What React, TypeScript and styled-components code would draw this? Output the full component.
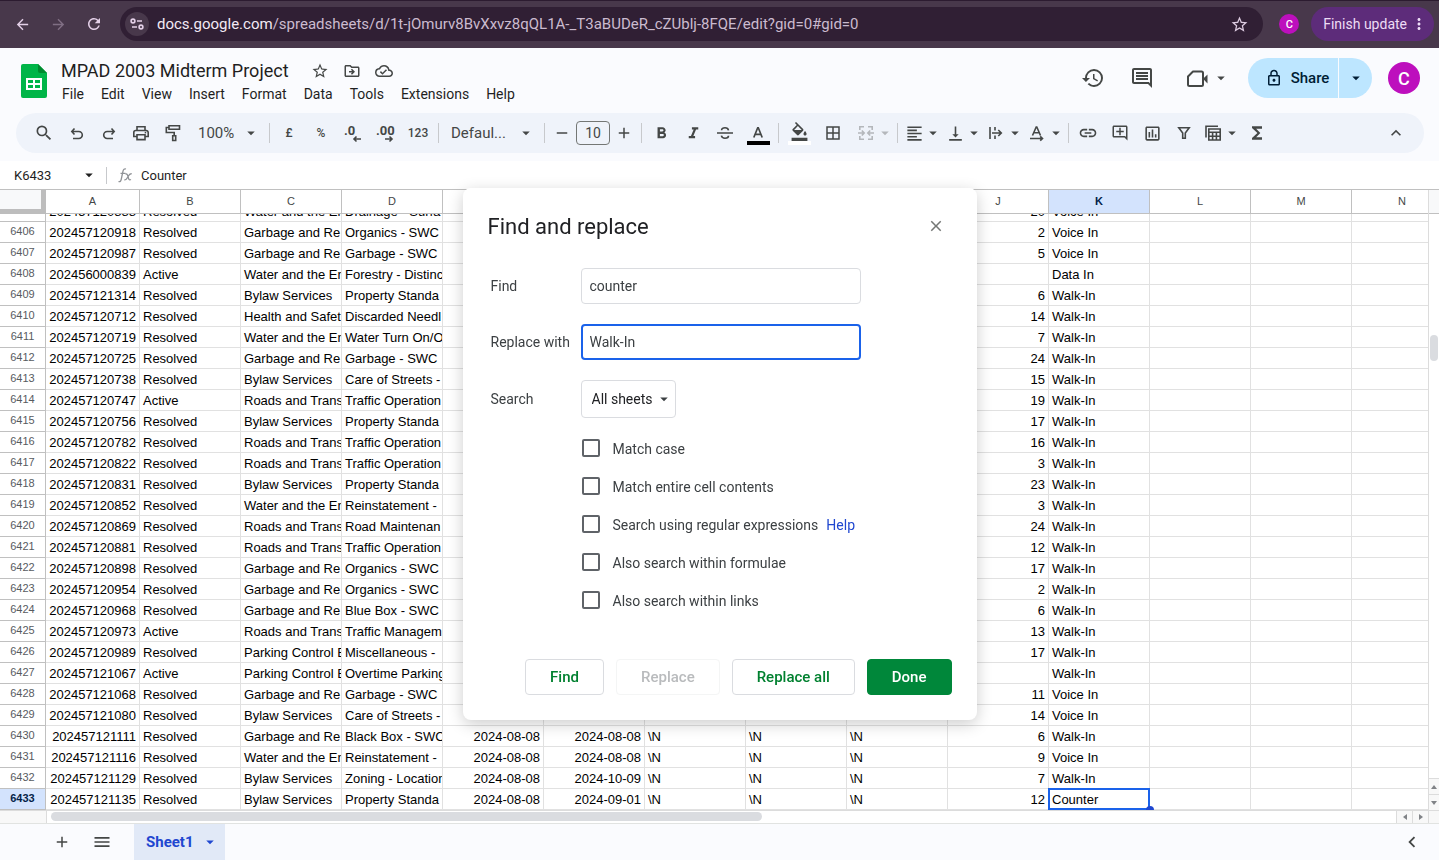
import React, { useLayoutEffect, useRef } from "react";
import styled, { createGlobalStyle, css } from "styled-components";
import {
  MdAdd, MdArrowBack, MdArrowDropDown, MdArrowForward, MdBorderAll, MdClose, MdExpandLess, MdFormatAlignLeft,
  MdFormatBold, MdFormatColorFill, MdFormatItalic, MdFunctions, MdHistory, MdLink, MdMenu, MdMoreVert,
  MdOutlineAddComment, MdOutlineComment, MdOutlineDriveFileMove, MdOutlineInsertChart, MdOutlineLock,
  MdOutlineCloudDone, MdRefresh, MdRemove, MdSearch, MdStarBorder, MdChevronLeft, MdVerticalAlignBottom,
} from "react-icons/md";

const ui = `Roboto, "Liberation Sans", sans-serif`;
const display = `Roboto, "Open Sans", sans-serif`;
const arial = `"Liberation Sans", Arial, sans-serif`;

const GlobalStyle = createGlobalStyle`
  *, *::before, *::after { box-sizing: border-box; }
  body { margin: 0; background: #fff; font-family: ${ui}; overflow: hidden; }
  button, input, select { font: inherit; color: inherit; margin: 0; }
  svg { display: block; flex: none; }
`;

const Page = styled.div`
  display: flex;
  flex-direction: column;
  height: 100vh;
`;

/* ---------- browser chrome ---------- */
const BrowserBar = styled.div`
  display: flex;
  align-items: center;
  height: 48px;
  padding: 0 5px 1px 4px;
  background: #48384b;
  border-top: 1px solid #2c1b30;
  color: #dccbe0;
`;
const NavButton = styled.button<{ $dim?: boolean }>`
  display: grid;
  place-items: center;
  width: 36px;
  height: 32px;
  padding: 0;
  border: 0;
  background: none;
  color: ${(p) => (p.$dim ? "#806f84" : "#e4d0e8")};
`;
const Omnibox = styled.div`
  display: flex;
  flex: 1;
  align-items: center;
  min-width: 0;
  height: 34px;
  margin: 0 16px 0 8px;
  padding: 0 14px 0 5px;
  border-radius: 17px;
  background: #301f34;
`;
const SiteInfo = styled.button`
  display: grid;
  place-items: center;
  width: 24px;
  height: 24px;
  padding: 0;
  border: 0;
  border-radius: 50%;
  background: #48384b;
  color: #e4d0e8;
`;
const Url = styled.span`
  flex: 1;
  margin-left: 8px;
  font-size: 15px;
  white-space: nowrap;
  overflow: hidden;
  color: #cbbbcf;
`;
const Host = styled.span`
  color: #f3eaf5;
`;
const Avatar = styled.button<{ $size: number }>`
  width: ${(p) => p.$size}px;
  height: ${(p) => p.$size}px;
  flex: none;
  padding: 0;
  border: 0;
  border-radius: 50%;
  background: #bd0fbd;
  color: #fff;
  font-size: ${(p) => (p.$size > 24 ? 18 : 11)}px;
  font-weight: 500;
`;
const UpdateButton = styled.button`
  display: flex;
  align-items: center;
  gap: 3px;
  height: 34px;
  margin-left: 12px;
  padding: 0 6px 0 12px;
  border: 0;
  border-radius: 17px;
  background: #5d2c7a;
  color: #eddcf5;
  font-size: 14px;
  white-space: nowrap;
`;

/* ---------- document header ---------- */
const Header = styled.header`
  padding-bottom: 8px;
  background: #fafbfe;
  color: #444746;
`;
const TitleBar = styled.div`
  display: flex;
  align-items: center;
  height: 65px;
  padding: 0 19px 0 21px;
`;
const Heading = styled.div`
  flex: 1;
  min-width: 0;
  margin-left: 14px;
  padding-top: 2px;
`;
const TitleRow = styled.div`
  display: flex;
  align-items: center;
  gap: 14px;
  height: 24px;
`;
const Title = styled.h1`
  margin: 0 8px 0 0;
  color: #1f1f1f;
  font: 400 18px/24px ${display};
  white-space: nowrap;
`;
const PlainButton = styled.button`
  display: flex;
  align-items: center;
  padding: 0;
  border: 0;
  background: none;
  color: inherit;
`;
const MenuBar = styled.nav`
  display: flex;
  gap: 17px;
  height: 22px;
  margin-left: 1px;
`;
const MenuItem = styled.button`
  padding: 0;
  border: 0;
  background: none;
  color: #1f1f1f;
  font-size: 14px;
  line-height: 22px;
`;
const HeaderActions = styled.div`
  display: flex;
  align-self: flex-start;
  align-items: center;
  height: 60px;
`;
const HeaderIcons = styled.div`
  display: flex;
  align-items: center;
  gap: 25px;
  margin-right: 18px;
`;
const CallButton = styled(PlainButton)`
  gap: 3px;
  padding-left: 6px;
`;
const ShareGroup = styled.div`
  display: flex;
  gap: 1px;
  height: 40px;
  margin-right: 16px;
  border-radius: 20px;
  overflow: hidden;
  color: #001d35;
`;
const ShareButton = styled.button`
  display: flex;
  align-items: center;
  justify-content: center;
  gap: 8px;
  width: 90px;
  padding: 0 0 0 8px;
  border: 0;
  background: #bde6ff;
  font-size: 15px;
  font-weight: 500;
`;
const ShareMenu = styled(ShareButton)`
  width: 33px;
  padding: 0;
`;

/* ---------- toolbar ---------- */
const Toolbar = styled.div`
  display: flex;
  align-items: center;
  height: 40px;
  margin: 0 15px 0 16px;
  padding: 0 12px 0 10px;
  border-radius: 20px;
  background: #eff3fa;
`;
const Tool = styled.button<{ $w?: number; $faded?: boolean }>`
  display: flex;
  flex: none;
  align-items: center;
  justify-content: center;
  width: ${(p) => p.$w ?? 32}px;
  height: 28px;
  padding: 0;
  border: 0;
  background: none;
  font-size: 12px;
  font-weight: 500;
  color: ${(p) => (p.$faded ? "#b4b7bb" : "#444746")};
`;
const SplitTool = styled(Tool)`
  justify-content: flex-end;
`;
const MenuTool = styled(Tool)`
  justify-content: space-between;
  padding: 0 6px 0 9px;
  font-size: 15px;
  font-weight: 400;
`;
const Divider = styled.span`
  flex: none;
  width: 1px;
  height: 20px;
  margin: 0 3px;
  background: #c7c9cc;
`;
const SizeBox = styled.input`
  width: 34px;
  height: 24px;
  padding: 0;
  border: 1px solid #747775;
  border-radius: 4px;
  background: none;
  color: #444746;
  font-size: 14px;
  text-align: center;
`;
const Swatched = styled.span<{ $color: string }>`
  display: grid;
  justify-items: center;
  align-content: end;
  width: 23px;
  height: 24px;
  border-bottom: 4px solid ${(p) => p.$color};
`;
const Spacer = styled.span`
  flex: 1;
`;

/* ---------- formula bar ---------- */
const FormulaBar = styled.div`
  display: flex;
  align-items: center;
  height: 28px;
  color: #1f1f1f;
  font-size: 13px;
`;
const NameBox = styled.input`
  width: 66px;
  padding: 0;
  margin-left: 14px;
  border: 0;
  background: none;
`;
const FormulaRule = styled.span`
  width: 1px;
  height: 17px;
  margin: 0 11px 0 8px;
  background: #c7c9cc;
`;
const FormulaInput = styled.input`
  flex: 1;
  min-width: 0;
  margin-left: 8px;
  padding: 0;
  border: 0;
  background: none;
`;

/* ---------- grid ---------- */
const GridArea = styled.div`
  display: flex;
  flex: 1;
  min-height: 0;
  border-top: 1px solid #c0c0c0;
`;
const GridViewport = styled.div`
  flex: 1;
  min-width: 0;
  overflow: hidden;
`;
const Sheet = styled.table`
  width: 1453px;
  table-layout: fixed;
  border-collapse: separate;
  border-spacing: 0;
  font: 13px/18px ${arial};
  color: #000;
`;
const Col = styled.col<{ $w: number }>`
  width: ${(p) => p.$w}px;
`;
const headCell = css`
  padding: 0 0 2px;
  border: 0 solid #c0c0c0;
  border-right-width: 1px;
  border-bottom-width: 1px;
  font-size: 11px;
  text-align: center;
`;
const HeadCell = styled.th<{ $active?: boolean }>`
  ${headCell}
  position: sticky;
  top: 0;
  z-index: 1;
  height: 24px;
  background: ${(p) => (p.$active ? "#d3e3fd" : "#fff")};
  color: ${(p) => (p.$active ? "#041e49" : "#444746")};
  font-weight: ${(p) => (p.$active ? 700 : 400)};
`;
const Corner = styled.th`
  ${headCell}
  position: sticky;
  top: 0;
  z-index: 1;
  background: #f8f9fa;
  border-color: #bdbdbd;
  border-right-width: 5px;
  border-bottom-width: 5px;
`;
const RowHead = styled.th<{ $active?: boolean }>`
  ${headCell}
  height: 21px;
  background: ${(p) => (p.$active ? "#d3e3fd" : "#fff")};
  color: ${(p) => (p.$active ? "#041e49" : "#575b5f")};
  font-weight: ${(p) => (p.$active ? 700 : 400)};
`;
const Cell = styled.td<{ $right?: boolean; $selected?: boolean }>`
  height: 21px;
  padding: 2px 3px 0;
  border: 0 solid #e1e1e1;
  border-right-width: 1px;
  border-bottom-width: 1px;
  white-space: nowrap;
  text-align: ${(p) => (p.$right ? "right" : "left")};
  overflow: ${(p) => (p.$selected ? "visible" : "hidden")};
  ${(p) =>
    p.$selected &&
    css`
      position: relative;
      &::before {
        content: "";
        position: absolute;
        inset: -1px;
        border: 2px solid #1a62ea;
      }
      &::after {
        content: "";
        position: absolute;
        right: -5px;
        bottom: -1px;
        width: 8px;
        height: 4px;
        border-radius: 4px 4px 0 0;
        background: #1f47d0;
      }
    `}
`;
const VScroll = styled.div`
  display: flex;
  flex-direction: column;
  width: 11px;
  border-left: 1px solid #dcdcdc;
`;
const VScrollHead = styled.div`
  height: 24px;
  background: #f8f9fa;
  border-bottom: 1px solid #c0c0c0;
`;
const VTrack = styled.div`
  flex: 1;
  padding: 121px 1px 0;
`;
const VThumb = styled.div`
  height: 26px;
  border-radius: 4px;
  background: #dadce0;
`;
const ScrollStep = styled.button<{ $side: "top" | "left" }>`
  display: grid;
  place-items: center;
  flex: none;
  width: ${(p) => (p.$side === "left" ? "16px" : "auto")};
  height: ${(p) => (p.$side === "top" ? "16px" : "auto")};
  padding: 0;
  border: 0 solid #dcdcdc;
  border-${(p) => p.$side}-width: 1px;
  background: #f8f8f8;
  color: #808387;
`;
const HScroll = styled.div`
  display: flex;
  height: 13px;
  border-top: 1px solid #dcdcdc;
`;
const HScrollHead = styled.div`
  width: 47px;
  background: #f8f8f8;
  border-right: 1px solid #dcdcdc;
`;
const HTrack = styled.div`
  flex: 1;
  padding: 1px 4px;
`;
const HThumb = styled.div`
  width: 53%;
  height: 9px;
  border-radius: 5px;
  background: #dadce0;
`;
const ScrollCorner = styled.div`
  width: 11px;
  background: #f8f8f8;
  border-left: 1px solid #dcdcdc;
`;

/* ---------- sheet tabs ---------- */
const SheetBar = styled.footer`
  display: flex;
  align-items: center;
  height: 37px;
  padding: 0 16px 0 42px;
  border-top: 1px solid #e1e3e1;
  background: #fafbfe;
  color: #444746;
`;
const SheetTool = styled.button`
  display: grid;
  place-items: center;
  width: 40px;
  height: 36px;
  padding: 0;
  border: 0;
  background: none;
  color: inherit;
`;
const SheetTab = styled.button`
  display: flex;
  align-items: center;
  gap: 7px;
  height: 100%;
  margin-left: 12px;
  padding: 0 6px 0 12px;
  border: 0;
  background: #e1e9f7;
  color: #1f47d0;
  font-size: 15px;
  font-weight: 700;
`;

/* ---------- dialog ---------- */
const DialogLayer = styled.div`
  position: fixed;
  inset: 0;
  display: flex;
  align-items: flex-start;
  justify-content: center;
  padding-top: 188px;
  z-index: 5;
`;
const Dialog = styled.form`
  display: flex;
  flex-direction: column;
  width: 514px;
  padding: 24px 25px 25px;
  border-radius: 8px;
  background: #fff;
  box-shadow: 0 4px 16px rgba(0, 0, 0, 0.2);
  color: #3c4043;
  font-size: 14px;
`;
const DialogHead = styled.div`
  display: flex;
  justify-content: space-between;
  align-items: center;
  height: 30px;
  margin-bottom: 26px;
  padding-right: 7px;
  color: #202124;
`;
const DialogTitle = styled.h2`
  margin: 0;
  font: 400 22px/30px ${display};
`;
const CloseButton = styled(PlainButton)`
  height: 28px;
  align-self: flex-start;
  color: #747775;
`;
const Field = styled.div`
  display: grid;
  grid-template-columns: 90px auto;
  justify-content: start;
  align-items: center;
  margin-bottom: 20px;
  padding-left: 3px;
`;
const TextInput = styled.input<{ $active?: boolean }>`
  width: 280px;
  height: 36px;
  padding: 0 ${(p) => (p.$active ? 7 : 8)}px;
  border: ${(p) => (p.$active ? "2px solid #1a62ea" : "1px solid #dadce0")};
  border-radius: 4px;
  background: #fff;
  outline: none;
`;
const SelectBox = styled.span`
  display: grid;
  grid-template-areas: "box";
  align-items: center;
  width: 95px;
`;
const Select = styled.select`
  grid-area: box;
  height: 38px;
  padding: 0 0 0 10px;
  border: 1px solid #dadce0;
  border-radius: 4px;
  background: none;
  appearance: none;
  color: #202124;
`;
const SelectCaret = styled.span`
  grid-area: box;
  justify-self: end;
  padding-right: 3px;
  pointer-events: none;
`;
const Options = styled.div`
  display: grid;
  gap: 20px;
  margin: 1px 0 50px 94px;
`;
const Option = styled.div`
  display: flex;
  align-items: center;
  height: 18px;
  line-height: 16px;
`;
const CheckBox = styled.input`
  width: 18px;
  height: 18px;
  margin-right: 13px;
  appearance: none;
  border: 2px solid #5f6368;
  border-radius: 2px;
  background: #fff;
`;
const OptionLabel = styled.label`
  padding-top: 2px;
`;
const HelpLink = styled.a`
  margin-left: 8px;
  padding-top: 2px;
  color: #1f47d0;
  text-decoration: none;
`;
const Actions = styled.div`
  display: flex;
  justify-content: flex-end;
  gap: 12px;
`;
const ActionButton = styled.button<{ $kind?: "primary" }>`
  height: 36px;
  padding: 0 24px;
  border: 1px solid #dadce0;
  border-radius: 4px;
  background: #fff;
  color: #00802f;
  font-weight: 500;
  font-size: 15px;
  white-space: nowrap;
  &:disabled {
    border-color: #f4f5f5;
    color: #b9bbbd;
  }
  ${(p) =>
    p.$kind === "primary" &&
    css`
      border-color: #00873a;
      background: #00873a;
      color: #fff;
    `}
`;

/* ---------- drawings ---------- */
const Line = ({ size = 20, children }: { size?: number; children: React.ReactNode }) => (
  <svg width={size} height={size} viewBox="0 0 20 20" fill="none" stroke="currentColor" strokeWidth="1.6" aria-hidden="true">
    {children}
  </svg>
);
const Caret = () => <MdArrowDropDown size={18} />;

const SheetsLogo = () => (
  <svg width="26" height="34" viewBox="0 0 26 34" aria-hidden="true">
    <path d="M2 0h15l9 9v23a2 2 0 0 1-2 2H2a2 2 0 0 1-2-2V2a2 2 0 0 1 2-2z" fill="#00b548" />
    <path d="M17 0l9 9h-7a2 2 0 0 1-2-2z" fill="#008a2f" />
    <path d="M5 14h16v12H5zM7 16v3h5v-3zm7 0v3h5v-3zm-7 5v3h5v-3zm7 0v3h5v-3z" fill="#fff" fillRule="evenodd" />
  </svg>
);
const SiteInfoIcon = () => (
  <svg width="14" height="14" viewBox="0 0 14 14" fill="none" stroke="currentColor" strokeWidth="1.6" aria-hidden="true">
    <circle cx="3" cy="4" r="1.9" /><path d="M7 4h5M2 10h5" /><circle cx="11" cy="10" r="1.9" />
  </svg>
);
const UndoIcon = () => <Line><path d="M7.500 5.500 4.800 8.500l2.700 3M4.800 8.500h7a3.500 3.500 0 0 1 0 7H6" /></Line>;
const RedoIcon = () => <Line><path d="M12.500 5.500l2.700 3-2.700 3M15.200 8.500h-7a3.500 3.500 0 0 0 0 7H14" /></Line>;
const PrintIcon = () => (
  <Line><path d="M6 7V3.800h8V7M5.500 13.500H2.800V9.500a2 2 0 0 1 2-2h10.400a2 2 0 0 1 2 2v4h-2.700M6 11.800h8v4.800H6z" /><path d="M13.700 9.600h1.500" /></Line>
);
const PaintIcon = () => (
  <Line><path d="M6 2.800h10.500v3.400H6zM6 4.500H3.300v5h7.900v3.200M9.700 12.700h3v4.800h-3z" /></Line>
);
const StrikeIcon = () => (
  <Line><path d="M2 10h16M13.500 7.300c-.3-1.600-1.500-2.500-3.500-2.500S6.600 5.700 6.600 7.300M6.400 12.700c.3 1.600 1.600 2.500 3.600 2.500s3.500-.9 3.500-2.500" /></Line>
);
const MergeIcon = () => (
  <Line><path d="M8 3.800H3.800V7M12 3.800h4.200V7M8 16.200H3.800V13M12 16.200h4.200V13M2 10h6M5.800 7.500 8.200 10l-2.400 2.500M18 10h-6M14.200 7.500 11.800 10l2.400 2.500" /></Line>
);
const WrapIcon = () => <Line><path d="M4 4v12M9 4v3.500M9 12.500V16M6 10h9M12.300 7l3 3-3 3" /></Line>;
const RotateIcon = () => (
  <Line><path d="M5.500 12.500 9.200 4h.6l3.700 8.500M6.800 9.800h5.400M3 15.500h12M13.200 13.300l2.300 2.200-2.300 2.200" /></Line>
);
const FilterIcon = () => <Line><path d="M4.800 4.800h10.400L11.300 10v5.300H8.700V10z" /></Line>;
const TableViewsIcon = () => (
  <Line><path d="M5.800 6h11.400v11H5.800zM5.800 9.300h11.400M5.800 13.200h11.400M9.600 9.300V17M13.400 9.300V17M3 14.500V3.300h12" /></Line>
);
const DecimalIcon = ({ digits, more }: { digits: string; more?: boolean }) => (
  <svg width="22" height="20" viewBox="0 0 22 20" aria-hidden="true">
    <text x="2" y="12" fontSize="13" fontWeight="700" fontFamily="Roboto, sans-serif" fill="currentColor">{digits}</text>
    <path d={more ? "M11 16h7M15.500 13.500 18 16l-2.500 2.500" : "M12 16h7M14.500 13.500 12 16l2.500 2.500"} stroke="currentColor" strokeWidth="1.600" fill="none" />
  </svg>
);
const TextColorIcon = () => (
  <svg width="14" height="16" viewBox="0 0 14 16" fill="none" stroke="currentColor" strokeWidth="1.700" aria-hidden="true">
    <path d="M2.800 12.500 6.700 2.800h.6l3.900 9.700M4.200 9.300h5.600" />
  </svg>
);
const FxIcon = () => (
  <svg width="15" height="16" viewBox="0 0 15 16" fill="none" stroke="#8f9296" strokeWidth="1.300" aria-hidden="true">
    <path d="M.5 14.500c1.500.5 2.300-.2 2.700-2L5 4.200C5.400 2.300 6.300 1.500 8 2M2.500 6.300h5M7.500 7.300c1.500-.8 2 .2 2.500 2.200.600 2.500 1 4 3 3M13.700 6.800c-2-.5-2.700 1-3.700 2.900S8 13 6.300 12.800" />
  </svg>
);
const MeetIcon = () => (
  <svg width="24" height="24" viewBox="0 0 24 24" fill="none" stroke="currentColor" strokeWidth="2" aria-hidden="true">
    <path d="M8 5.500h8.500A1.500 1.500 0 0 1 18 7v11.500a1.500 1.500 0 0 1-1.500 1.500h-12A1.500 1.500 0 0 1 3 18.500v-8z" strokeLinejoin="round" />
    <path d="M18 12.800 22.500 8.500v9z" fill="currentColor" stroke="none" />
  </svg>
);
const Triangle = ({ d }: { d: string }) => (
  <svg width="6" height="6" viewBox="0 0 6 6" fill="currentColor" aria-hidden="true"><path d={d} /></svg>
);

/* ---------- data ---------- */
const columns = ["A", "B", "C", "D", "E", "F", "G", "H", "I", "J", "K", "L", "M", "N"];
const GAR = "Garbage and Re";
const WAT = "Water and the En";
const BYL = "Bylaw Services";
const ROA = "Roads and Trans";
const PAR = "Parking Control E";
const PROP = "Property Standa";
const TRAF = "Traffic Operation";

type Row = [number, string, string, string, string, string, string, string?];
const rows: Row[] = [
  [6405, "202457120888", "Resolved", WAT, "Drainage - Surfa", "20", "Voice In"],
  [6406, "202457120918", "Resolved", GAR, "Organics - SWC", "2", "Voice In"],
  [6407, "202457120987", "Resolved", GAR, "Garbage - SWC", "5", "Voice In"],
  [6408, "202456000839", "Active", WAT, "Forestry - Distinc", "", "Data In"],
  [6409, "202457121314", "Resolved", BYL, PROP, "6", "Walk-In"],
  [6410, "202457120712", "Resolved", "Health and Safet", "Discarded Needl", "14", "Walk-In"],
  [6411, "202457120719", "Resolved", WAT, "Water Turn On/O", "7", "Walk-In"],
  [6412, "202457120725", "Resolved", GAR, "Garbage - SWC", "24", "Walk-In"],
  [6413, "202457120738", "Resolved", BYL, "Care of Streets -", "15", "Walk-In"],
  [6414, "202457120747", "Active", ROA, TRAF, "19", "Walk-In"],
  [6415, "202457120756", "Resolved", BYL, PROP, "17", "Walk-In"],
  [6416, "202457120782", "Resolved", ROA, TRAF, "16", "Walk-In"],
  [6417, "202457120822", "Resolved", ROA, TRAF, "3", "Walk-In"],
  [6418, "202457120831", "Resolved", BYL, PROP, "23", "Walk-In"],
  [6419, "202457120852", "Resolved", WAT, "Reinstatement -", "3", "Walk-In"],
  [6420, "202457120869", "Resolved", ROA, "Road Maintenan", "24", "Walk-In"],
  [6421, "202457120881", "Resolved", ROA, TRAF, "12", "Walk-In"],
  [6422, "202457120898", "Resolved", GAR, "Organics - SWC", "17", "Walk-In"],
  [6423, "202457120954", "Resolved", GAR, "Organics - SWC", "2", "Walk-In"],
  [6424, "202457120968", "Resolved", GAR, "Blue Box - SWC", "6", "Walk-In"],
  [6425, "202457120973", "Active", ROA, "Traffic Managem", "13", "Walk-In"],
  [6426, "202457120989", "Resolved", PAR, "Miscellaneous -", "17", "Walk-In"],
  [6427, "202457121067", "Active", PAR, "Overtime Parking", "", "Walk-In"],
  [6428, "202457121068", "Resolved", GAR, "Garbage - SWC", "11", "Voice In"],
  [6429, "202457121080", "Resolved", BYL, "Care of Streets -", "14", "Voice In", "2024-08-08"],
  [6430, "202457121111", "Resolved", GAR, "Black Box - SWC", "6", "Walk-In", "2024-08-08"],
  [6431, "202457121116", "Resolved", WAT, "Reinstatement -", "9", "Voice In", "2024-08-08"],
  [6432, "202457121129", "Resolved", BYL, "Zoning - Location", "7", "Walk-In", "2024-10-09"],
  [6433, "202457121135", "Resolved", BYL, PROP, "12", "Counter", "2024-09-01"],
];

function SheetGrid() {
  const viewport = useRef<HTMLDivElement>(null);
  useLayoutEffect(() => {
    const el = viewport.current;
    if (el) el.scrollTop = el.scrollHeight;
  }, []);
  return (
    <GridArea>
      <GridViewport ref={viewport}>
        <Sheet>
          <colgroup>
            <Col $w={46} />
            {columns.map((c, i) => <Col key={c} $w={i === 0 ? 94 : 101} />)}
          </colgroup>
          <thead>
            <tr>
              <Corner aria-label="Select all" />
              {columns.map((c) => <HeadCell key={c} scope="col" $active={c === "K"}>{c}</HeadCell>)}
            </tr>
          </thead>
          <tbody>
            {rows.map(([n, id, status, dept, kind, days, channel, closed]) => (
              <tr key={n}>
                <RowHead scope="row" $active={n === 6433}>{n}</RowHead>
                <Cell $right>{id}</Cell>
                <Cell>{status}</Cell>
                <Cell>{dept}</Cell>
                <Cell>{kind}</Cell>
                <Cell $right>{closed && "2024-08-08"}</Cell>
                <Cell $right>{closed}</Cell>
                <Cell>{closed && "\\N"}</Cell>
                <Cell>{closed && "\\N"}</Cell>
                <Cell>{closed && "\\N"}</Cell>
                <Cell $right>{days}</Cell>
                <Cell $selected={n === 6433}>{channel}</Cell>
                <Cell /><Cell /><Cell />
              </tr>
            ))}
          </tbody>
        </Sheet>
      </GridViewport>
      <VScroll>
        <VScrollHead />
        <VTrack><VThumb /></VTrack>
        <ScrollStep $side="top" aria-label="Scroll up"><Triangle d="M0 5h6L3 1z" /></ScrollStep>
        <ScrollStep $side="top" aria-label="Scroll down"><Triangle d="M0 1h6L3 5z" /></ScrollStep>
      </VScroll>
    </GridArea>
  );
}

const menus = ["File", "Edit", "View", "Insert", "Format", "Data", "Tools", "Extensions", "Help"];

const options = [
  "Match case",
  "Match entire cell contents",
  "Search using regular expressions",
  "Also search within formulae",
  "Also search within links",
];

export default function App() {
  return (
    <Page>
      <GlobalStyle />
      <BrowserBar>
        <NavButton aria-label="Back"><MdArrowBack size={17} /></NavButton>
        <NavButton aria-label="Forward" $dim><MdArrowForward size={17} /></NavButton>
        <NavButton aria-label="Reload"><MdRefresh size={18} /></NavButton>
        <Omnibox>
          <SiteInfo aria-label="Site information"><SiteInfoIcon /></SiteInfo>
          <Url><Host>docs.google.com</Host>/spreadsheets/d/1t-jOmurv8BvXxvz8qQL1A-_T3aBUDeR_cZUblj-8FQE/edit?gid=0#gid=0</Url>
          <PlainButton aria-label="Bookmark"><MdStarBorder size={19} /></PlainButton>
        </Omnibox>
        <Avatar $size={20}>C</Avatar>
        <UpdateButton>Finish update<MdMoreVert size={18} /></UpdateButton>
      </BrowserBar>

      <Header>
        <TitleBar>
          <SheetsLogo />
          <Heading>
            <TitleRow>
              <Title>MPAD 2003 Midterm Project</Title>
              <PlainButton aria-label="Star"><MdStarBorder size={18} /></PlainButton>
              <PlainButton aria-label="Move"><MdOutlineDriveFileMove size={18} /></PlainButton>
              <PlainButton aria-label="Document status"><MdOutlineCloudDone size={18} /></PlainButton>
            </TitleRow>
            <MenuBar>{menus.map((m) => <MenuItem key={m}>{m}</MenuItem>)}</MenuBar>
          </Heading>
          <HeaderActions>
            <HeaderIcons>
              <PlainButton aria-label="Version history"><MdHistory size={24} /></PlainButton>
              <PlainButton aria-label="Comments"><MdOutlineComment size={24} /></PlainButton>
              <CallButton aria-label="Join a call"><MeetIcon /><Caret /></CallButton>
            </HeaderIcons>
            <ShareGroup>
              <ShareButton><MdOutlineLock size={18} />Share</ShareButton>
              <ShareMenu aria-label="Sharing options"><Caret /></ShareMenu>
            </ShareGroup>
            <Avatar $size={32}>C</Avatar>
          </HeaderActions>
        </TitleBar>

        <Toolbar role="toolbar">
          <Tool $w={35} aria-label="Search the menus"><MdSearch size={20} /></Tool>
          <Tool aria-label="Undo"><UndoIcon /></Tool>
          <Tool aria-label="Redo"><RedoIcon /></Tool>
          <Tool aria-label="Print"><PrintIcon /></Tool>
          <Tool aria-label="Paint format"><PaintIcon /></Tool>
          <MenuTool $w={77}>100%<Caret /></MenuTool>
          <Divider />
          <Tool>£</Tool>
          <Tool>%</Tool>
          <Tool aria-label="Decrease decimal places"><DecimalIcon digits=".0" /></Tool>
          <Tool aria-label="Increase decimal places"><DecimalIcon digits=".00" more /></Tool>
          <Tool $w={34}>123</Tool>
          <Divider />
          <MenuTool $w={99}>Defaul...<Caret /></MenuTool>
          <Divider />
          <Tool $w={28} aria-label="Decrease font size"><MdRemove size={18} /></Tool>
          <SizeBox aria-label="Font size" defaultValue="10" />
          <Tool $w={28} aria-label="Increase font size"><MdAdd size={18} /></Tool>
          <Divider />
          <Tool aria-label="Bold"><MdFormatBold size={19} /></Tool>
          <Tool aria-label="Italic"><MdFormatItalic size={19} /></Tool>
          <Tool aria-label="Strikethrough"><StrikeIcon /></Tool>
          <Tool $w={34} aria-label="Text colour"><Swatched $color="#000"><TextColorIcon /></Swatched></Tool>
          <Divider />
          <Tool $w={34} aria-label="Fill colour"><Swatched $color="#fff"><MdFormatColorFill size={19} /></Swatched></Tool>
          <Tool $w={34} aria-label="Borders"><MdBorderAll size={18} /></Tool>
          <SplitTool $w={44} $faded aria-label="Merge cells"><MergeIcon /><Caret /></SplitTool>
          <Divider />
          <SplitTool $w={41} aria-label="Horizontal align"><MdFormatAlignLeft size={19} /><Caret /></SplitTool>
          <SplitTool $w={41} aria-label="Vertical align"><MdVerticalAlignBottom size={19} /><Caret /></SplitTool>
          <SplitTool $w={41} aria-label="Text wrapping"><WrapIcon /><Caret /></SplitTool>
          <SplitTool $w={41} aria-label="Text rotation"><RotateIcon /><Caret /></SplitTool>
          <Divider />
          <Tool aria-label="Insert link"><MdLink size={20} /></Tool>
          <Tool aria-label="Insert comment"><MdOutlineAddComment size={18} /></Tool>
          <Tool aria-label="Insert chart"><MdOutlineInsertChart size={19} /></Tool>
          <Tool aria-label="Create a filter"><FilterIcon /></Tool>
          <SplitTool $w={41} aria-label="Filter views"><TableViewsIcon /><Caret /></SplitTool>
          <Tool aria-label="Functions"><MdFunctions size={20} /></Tool>
          <Spacer />
          <Tool aria-label="Hide the menus"><MdExpandLess size={20} /></Tool>
        </Toolbar>
      </Header>

      <FormulaBar>
        <NameBox aria-label="Name box" defaultValue="K6433" />
        <Caret />
        <FormulaRule />
        <FxIcon />
        <FormulaInput aria-label="Formula" defaultValue="Counter" />
      </FormulaBar>

      <SheetGrid />
      <HScroll>
        <HScrollHead />
        <HTrack><HThumb /></HTrack>
        <ScrollStep $side="left" aria-label="Scroll left"><Triangle d="M5 0v6L1 3z" /></ScrollStep>
        <ScrollStep $side="left" aria-label="Scroll right"><Triangle d="M1 0v6l4-3z" /></ScrollStep>
        <ScrollCorner />
      </HScroll>

      <SheetBar>
        <SheetTool aria-label="Add sheet"><MdAdd size={18} /></SheetTool>
        <SheetTool aria-label="All sheets"><MdMenu size={20} /></SheetTool>
        <SheetTab>Sheet1<Caret /></SheetTab>
        <Spacer />
        <PlainButton aria-label="Show side panel"><MdChevronLeft size={22} /></PlainButton>
      </SheetBar>

      <DialogLayer>
        <Dialog role="dialog" aria-labelledby="dialog-title" onSubmit={(e) => e.preventDefault()}>
          <DialogHead>
            <DialogTitle id="dialog-title">Find and replace</DialogTitle>
            <CloseButton type="button" aria-label="Close"><MdClose size={18} /></CloseButton>
          </DialogHead>
          <Field>
            <label htmlFor="find">Find</label>
            <TextInput id="find" defaultValue="counter" />
          </Field>
          <Field>
            <label htmlFor="replace">Replace with</label>
            <TextInput id="replace" $active defaultValue="Walk-In" />
          </Field>
          <Field>
            <label htmlFor="scope">Search</label>
            <SelectBox>
              <Select id="scope"><option>All sheets</option></Select>
              <SelectCaret><Caret /></SelectCaret>
            </SelectBox>
          </Field>
          <Options>
            {options.map((text, i) => (
              <Option key={text}>
                <CheckBox type="checkbox" id={`option-${i}`} />
                <OptionLabel htmlFor={`option-${i}`}>{text}</OptionLabel>
                {i === 2 && <HelpLink href="#help">Help</HelpLink>}
              </Option>
            ))}
          </Options>
          <Actions>
            <ActionButton type="button">Find</ActionButton>
            <ActionButton type="button" disabled>Replace</ActionButton>
            <ActionButton type="button">Replace all</ActionButton>
            <ActionButton type="submit" $kind="primary">Done</ActionButton>
          </Actions>
        </Dialog>
      </DialogLayer>
    </Page>
  );
}
